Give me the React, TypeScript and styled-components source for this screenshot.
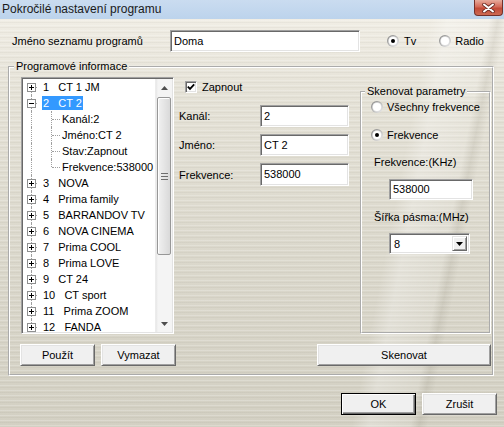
import React from 'react';
import styled, { createGlobalStyle } from 'styled-components';

const GlobalStyle = createGlobalStyle`
  html, body {
    margin: 0;
    padding: 0;
  }
  body {
    font-family: "Liberation Sans", Arial, sans-serif;
    font-size: 11px;
    color: #000;
  }
`;

const Window = styled.div`
  width: 504px;
  height: 427px;
  display: flex;
  flex-direction: column;
  overflow: hidden;
  background:
    linear-gradient(101deg, transparent 0 74%, rgba(255, 255, 255, 0.28) 77%, rgba(255, 255, 255, 0.12) 84%, rgba(120, 115, 100, 0.12) 85.5%, transparent 87%),
    repeating-linear-gradient(180deg, rgba(255, 255, 255, 0.2) 0 1px, transparent 1px 2px, rgba(90, 85, 70, 0.05) 2px 3px, transparent 3px 5px),
    linear-gradient(180deg, #f3f0e8 0%, #e5e2d7 22%, #dcd9cd 55%, #d3d0c3 100%);
`;

const TitleBar = styled.div`
  height: 19px;
  flex: none;
  display: flex;
  align-items: flex-start;
  justify-content: space-between;
  background: linear-gradient(180deg, #cadcf0 0%, #bcd3ec 100%);
`;

const Title = styled.span`
  font-size: 12px;
  line-height: 19px;
  padding-left: 2px;
  color: #1a1a1a;
`;

const CloseButton = styled.div`
  width: 29px;
  height: 16px;
  margin-right: 1px;
  box-sizing: border-box;
  border: 1px solid #73302a;
  border-top: none;
  border-radius: 0 0 4px 4px;
  background: linear-gradient(180deg, #e7ab9c 0%, #d46a58 45%, #c24a37 55%, #cd6a52 100%);
  display: flex;
  align-items: center;
  justify-content: center;
`;

const Body = styled.div`
  flex: 1;
  display: flex;
  flex-direction: column;
  padding: 11px 7px 0 8px;
`;

const TopRow = styled.div`
  height: 22px;
  display: flex;
  align-items: center;
`;

const TopLabel = styled.span`
  width: 158px;
  padding-left: 4px;
`;

const TextBox = styled.div<{ $w: number; $h?: number }>`
  width: ${(p) => p.$w}px;
  height: ${(p) => p.$h ?? 22}px;
  box-sizing: border-box;
  background: #fff;
  border: 1px solid;
  border-color: #a0a0a0 #fff #fff #a0a0a0;
  box-shadow: inset 1px 1px #696969, inset -1px -1px #e3e3e3;
  padding: 0 3px;
  display: flex;
  align-items: center;
  line-height: 13px;
`;

const RadioGroup = styled.div`
  display: flex;
  align-items: center;
  gap: 23px;
  margin-left: 27px;
`;

const Option = styled.label<{ $gap?: number }>`
  display: flex;
  align-items: center;
  gap: ${(p) => p.$gap ?? 4}px;
  height: 16px;
`;

const GroupBox = styled.fieldset<{ $w: number; $h?: number }>`
  margin: 0;
  padding: 0;
  min-width: 0;
  width: ${(p) => p.$w}px;
  ${(p) => (p.$h ? `height: ${p.$h}px;` : '')}
  box-sizing: border-box;
  border: 2px groove #fff;
`;

const Legend = styled.legend<{ $ml: number }>`
  margin-left: ${(p) => p.$ml}px;
  padding: 0 2px;
  line-height: 13px;
`;

const ProgramGroup = styled(GroupBox)`
  margin-top: 8px;
`;

const GroupContent = styled.div`
  display: flex;
  flex-direction: column;
  padding: 4px 1px 8px 11px;
`;

const MainRow = styled.div`
  height: 258px;
  display: flex;
  align-items: flex-start;
`;

/* ---------- tree ---------- */

const TreeFrame = styled.div`
  width: 153px;
  height: 257px;
  box-sizing: border-box;
  background: #fff;
  border: 1px solid;
  border-color: #a0a0a0 #fff #fff #a0a0a0;
  box-shadow: inset 1px 1px #696969, inset -1px -1px #e3e3e3;
  padding: 1px;
  display: flex;
`;

const TreeList = styled.div`
  flex: 1;
  overflow: hidden;
`;

const TreeRow = styled.div`
  height: 16px;
  display: flex;
  align-items: center;
  white-space: pre;
`;

const Gutter = styled.div<{ $w: number; $x: number; $up: boolean; $down: boolean; $branch: number }>`
  position: relative;
  flex: none;
  width: ${(p) => p.$w}px;
  height: 16px;

  &::before {
    content: '';
    position: absolute;
    left: ${(p) => p.$x}px;
    top: ${(p) => (p.$up ? 0 : 8)}px;
    bottom: ${(p) => (p.$down ? 0 : 8)}px;
    border-left: 1px dotted #a0a0a0;
  }

  &::after {
    content: '';
    display: ${(p) => (p.$branch > 0 ? 'block' : 'none')};
    position: absolute;
    left: ${(p) => p.$x + 1}px;
    top: 8px;
    width: ${(p) => p.$branch}px;
    border-top: 1px dotted #a0a0a0;
  }
`;

const Expander = styled.div`
  position: absolute;
  left: 4px;
  top: 4px;
  width: 9px;
  height: 9px;
  box-sizing: border-box;
  border: 1px solid #8e8f8f;
  background: #fff;
  z-index: 1;
  display: flex;
  align-items: center;
  justify-content: center;
`;

const ItemText = styled.span<{ $selected?: boolean }>`
  padding: 0 1px;
  line-height: 14px;
  background: ${(p) => (p.$selected ? '#3399ff' : 'transparent')};
  color: ${(p) => (p.$selected ? '#fff' : '#000')};
`;

const ScrollBar = styled.div`
  width: 17px;
  flex: none;
  display: flex;
  flex-direction: column;
  background: linear-gradient(90deg, #e6e6e6 0, #f4f4f4 2px, #f4f4f4 100%);
  border-left: 1px solid #ececec;
  box-sizing: border-box;
`;

const ScrollArrow = styled.div`
  height: 17px;
  flex: none;
  display: flex;
  align-items: center;
  justify-content: center;
`;

const ScrollTrack = styled.div`
  flex: 1;
  display: flex;
  flex-direction: column;
`;

const ScrollThumb = styled.div`
  height: 158px;
  margin: 1px 1px 0 1px;
  box-sizing: border-box;
  border: 1px solid #979797;
  border-radius: 2px;
  background: linear-gradient(90deg, #f1f1f1 0%, #e4e4e4 55%, #d9d9d9 100%);
  box-shadow: inset 1px 1px #fff;
  display: flex;
  align-items: center;
  justify-content: center;
`;

/* ---------- middle column ---------- */

const MiddleColumn = styled.div`
  width: 171px;
  margin-left: 5px;
  display: flex;
  flex-direction: column;
`;

const CheckRow = styled.label`
  height: 14px;
  margin-top: 3px;
  margin-left: 6px;
  display: flex;
  align-items: center;
  gap: 5px;
`;

const CheckBox = styled.div`
  width: 12px;
  height: 12px;
  box-sizing: border-box;
  background: #fff;
  border: 1px solid;
  border-color: #a0a0a0 #fff #fff #a0a0a0;
  box-shadow: inset 1px 1px #696969, inset -1px -1px #e3e3e3;
  display: flex;
  align-items: center;
  justify-content: center;
`;

const FieldList = styled.div`
  margin-top: 11px;
  display: flex;
  flex-direction: column;
  gap: 7px;
`;

const FieldRow = styled.div`
  display: flex;
  align-items: center;
`;

const FieldLabel = styled.span`
  width: 81px;
`;

/* ---------- scan group ---------- */

const ScanGroup = styled(GroupBox)`
  margin-left: 10px;
  margin-top: 8px;
`;

const ScanContent = styled.div`
  display: flex;
  flex-direction: column;
  padding: 1px 0 0 9px;
`;

const ScanLabel = styled.span<{ $mt: number }>`
  margin-top: ${(p) => p.$mt}px;
  margin-left: 3px;
  line-height: 14px;
`;

const Indented = styled.div<{ $mt: number }>`
  margin-top: ${(p) => p.$mt}px;
  margin-left: 18px;
`;

const Spaced = styled.div<{ $mt: number }>`
  margin-top: ${(p) => p.$mt}px;
`;

const Select = styled.div`
  width: 81px;
  height: 21px;
  box-sizing: border-box;
  background: #fff;
  border: 1px solid;
  border-color: #a0a0a0 #fff #fff #a0a0a0;
  box-shadow: inset 1px 1px #696969, inset -1px -1px #e3e3e3;
  padding: 2px 2px 2px 4px;
  display: flex;
  align-items: center;
  justify-content: space-between;
`;

const DropButton = styled.div`
  width: 15px;
  height: 15px;
  box-sizing: border-box;
  background: #f0f0f0;
  border: 1px solid;
  border-color: #e3e3e3 #696969 #696969 #e3e3e3;
  box-shadow: inset 1px 1px #fff, inset -1px -1px #a0a0a0;
  display: flex;
  align-items: center;
  justify-content: center;
`;

/* ---------- buttons ---------- */

const ButtonRow = styled.div`
  margin-top: 9px;
  margin-left: -1px;
  display: flex;
  gap: 6px;
`;

const Button = styled.button<{ $w: number; $default?: boolean; $push?: boolean }>`
  width: ${(p) => p.$w}px;
  height: 22px;
  margin: 0;
  ${(p) => (p.$push ? 'margin-left: auto;' : '')}
  padding: 0;
  box-sizing: border-box;
  font: inherit;
  color: #000;
  background: #f0f0f0;
  border: 1px solid;
  border-color: ${(p) => (p.$default ? '#000' : '#fff #696969 #696969 #fff')};
  box-shadow: ${(p) =>
    p.$default
      ? 'inset 1px 1px #fff, inset -1px -1px #696969, inset -2px -2px #a0a0a0'
      : 'inset 1px 1px #e3e3e3, inset -1px -1px #a0a0a0'};
`;

const BottomRow = styled.div`
  margin-top: 17px;
  display: flex;
  justify-content: flex-end;
  gap: 6px;
`;

/* ---------- drawings ---------- */

const RadioIcon = ({ checked }: { checked?: boolean }) => (
  <svg width="12" height="12" viewBox="0 0 12 12">
    <defs>
      <linearGradient id="radioRing" x1="0" y1="0" x2="1" y2="1">
        <stop offset="0" stopColor="#7c7c7c" />
        <stop offset="1" stopColor="#f2f2f2" />
      </linearGradient>
    </defs>
    <circle cx="6" cy="6" r="6" fill="url(#radioRing)" />
    <circle cx="6" cy="6" r="4.8" fill="#e2e2e2" />
    <circle cx="6" cy="6" r="4" fill="#fff" />
    {checked && <circle cx="6" cy="6" r="2" fill="#000" />}
  </svg>
);

const Radio = ({ label, checked, gap }: { label: string; checked?: boolean; gap?: number }) => (
  <Option $gap={gap}>
    <RadioIcon checked={checked} />
    <span>{label}</span>
  </Option>
);

const Sign = ({ open }: { open: boolean }) => (
  <svg width="5" height="5" viewBox="0 0 5 5">
    <rect x="0" y="2" width="5" height="1" fill="#000" />
    {!open && <rect x="2" y="0" width="1" height="5" fill="#000" />}
  </svg>
);

const Triangle = ({ up, color = '#4d4d4d' }: { up?: boolean; color?: string }) => (
  <svg width="7" height="4" viewBox="0 0 7 4">
    <polygon points={up ? '3.5,0 7,4 0,4' : '0,0 7,0 3.5,4'} fill={color} />
  </svg>
);

type Program = { num: string; name: string; open?: boolean; selected?: boolean; children?: string[] };

// the list goes on below FANDA, so the root line keeps running to the bottom edge
const programs: Program[] = [
  { num: '1', name: 'CT 1 JM' },
  {
    num: '2',
    name: 'CT 2',
    open: true,
    selected: true,
    children: ['Kanál:2', 'Jméno:CT 2', 'Stav:Zapnout', 'Frekvence:538000'],
  },
  { num: '3', name: 'NOVA' },
  { num: '4', name: 'Prima family' },
  { num: '5', name: 'BARRANDOV TV' },
  { num: '6', name: 'NOVA CINEMA' },
  { num: '7', name: 'Prima COOL' },
  { num: '8', name: 'Prima LOVE' },
  { num: '9', name: 'CT 24' },
  { num: '10', name: 'CT sport' },
  { num: '11', name: 'Prima ZOOM' },
  { num: '12', name: 'FANDA' },
];

const ProgramTree = () => (
  <TreeFrame>
    <TreeList>
      {programs.map((p, i) => (
        <React.Fragment key={p.num}>
          <TreeRow>
            <Gutter $w={19} $x={8} $up={i > 0} $down $branch={5}>
              <Expander>
                <Sign open={!!p.open} />
              </Expander>
            </Gutter>
            <ItemText $selected={p.selected}>{`${p.num}   ${p.name}`}</ItemText>
          </TreeRow>
          {p.open &&
            p.children?.map((c, j) => (
              <TreeRow key={c}>
                <Gutter $w={19} $x={8} $up $down $branch={0} />
                <Gutter
                  $w={19}
                  $x={9}
                  $up
                  $down={j < (p.children?.length ?? 0) - 1}
                  $branch={8}
                />
                <ItemText>{c}</ItemText>
              </TreeRow>
            ))}
        </React.Fragment>
      ))}
    </TreeList>
    <ScrollBar>
      <ScrollArrow>
        <Triangle up />
      </ScrollArrow>
      <ScrollTrack>
        <ScrollThumb>
          <svg width="7" height="7" viewBox="0 0 7 7">
            <rect x="0" y="0" width="7" height="1" fill="#6d6d6d" />
            <rect x="0" y="3" width="7" height="1" fill="#6d6d6d" />
            <rect x="0" y="6" width="7" height="1" fill="#6d6d6d" />
          </svg>
        </ScrollThumb>
      </ScrollTrack>
      <ScrollArrow>
        <Triangle />
      </ScrollArrow>
    </ScrollBar>
  </TreeFrame>
);

export default function App() {
  return (
    <>
      <GlobalStyle />
      <Window>
        <TitleBar>
          <Title>Pokročilé nastavení programu</Title>
          <CloseButton>
            <svg width="13" height="10" viewBox="0 0 13 10">
              <path d="M2 1.5 L11 8.5 M11 1.5 L2 8.5" stroke="#6b2c24" strokeWidth="3.6" strokeLinecap="round" />
              <path d="M2 1.5 L11 8.5 M11 1.5 L2 8.5" stroke="#fff" strokeWidth="2" strokeLinecap="round" />
            </svg>
          </CloseButton>
        </TitleBar>

        <Body>
          <TopRow>
            <TopLabel>Jméno seznamu programů</TopLabel>
            <TextBox $w={190}>Doma</TextBox>
            <RadioGroup>
              <Radio label="Tv" checked gap={5} />
              <Radio label="Radio" gap={4} />
            </RadioGroup>
          </TopRow>

          <ProgramGroup $w={486}>
            <Legend $ml={4}>Programové informace</Legend>
            <GroupContent>
              <MainRow>
                <ProgramTree />

                <MiddleColumn>
                  <CheckRow>
                    <CheckBox>
                      <svg width="8" height="8" viewBox="0 0 8 8">
                        <polyline points="0.8,3.6 3,5.9 7.2,1.4" fill="none" stroke="#000" strokeWidth="1.8" />
                      </svg>
                    </CheckBox>
                    <span>Zapnout</span>
                  </CheckRow>
                  <FieldList>
                    <FieldRow>
                      <FieldLabel>Kanál:</FieldLabel>
                      <TextBox $w={89}>2</TextBox>
                    </FieldRow>
                    <FieldRow>
                      <FieldLabel>Jméno:</FieldLabel>
                      <TextBox $w={89}>CT 2</TextBox>
                    </FieldRow>
                    <FieldRow>
                      <FieldLabel>Frekvence:</FieldLabel>
                      <TextBox $w={89} $h={23}>538000</TextBox>
                    </FieldRow>
                  </FieldList>
                </MiddleColumn>

                <ScanGroup $w={131} $h={249}>
                  <Legend $ml={3}>Skenovat parametry</Legend>
                  <ScanContent>
                    <Radio label="Všechny frekvence" />
                    <Spaced $mt={12}>
                      <Radio label="Frekvence" checked />
                    </Spaced>
                    <ScanLabel $mt={12}>Frekvence:(KHz)</ScanLabel>
                    <Indented $mt={10}>
                      <TextBox $w={84} $h={21}>538000</TextBox>
                    </Indented>
                    <ScanLabel $mt={10}>Šířka pásma:(MHz)</ScanLabel>
                    <Indented $mt={9}>
                      <Select>
                        <span>8</span>
                        <DropButton>
                          <Triangle color="#000" />
                        </DropButton>
                      </Select>
                    </Indented>
                  </ScanContent>
                </ScanGroup>
              </MainRow>

              <ButtonRow>
                <Button $w={75}>Použít</Button>
                <Button $w={75}>Vymazat</Button>
                <Button $w={174} $push>
                  Skenovat
                </Button>
              </ButtonRow>
            </GroupContent>
          </ProgramGroup>

          <BottomRow>
            <Button $w={75} $default>
              OK
            </Button>
            <Button $w={75}>Zrušit</Button>
          </BottomRow>
        </Body>
      </Window>
    </>
  );
}
